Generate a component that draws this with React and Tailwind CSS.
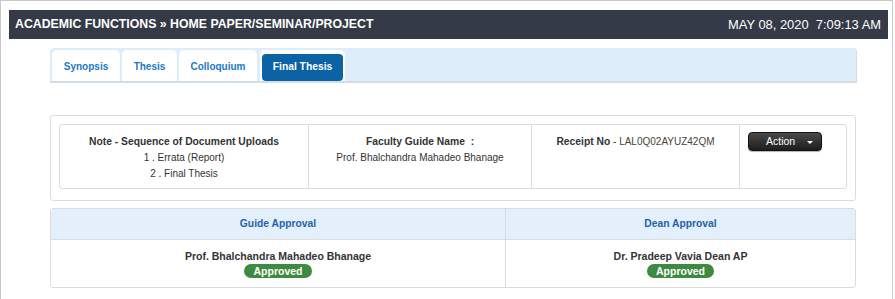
import React from "react";

const tabs = [
  { label: "Synopsis", w: "w-[68px]" },
  { label: "Thesis", w: "w-[55px]" },
  { label: "Colloquium", w: "w-[78px]" },
];

const Badge = () => (
  <span className="inline-block rounded-full bg-[#3f8a41] px-[9px] text-[10.5px] font-bold leading-[14px] text-white">
    Approved
  </span>
);

export default function App() {
  return (
    <div className="h-[299px] w-[895px] overflow-hidden bg-white font-['Liberation_Sans',Arial,sans-serif] text-[10px] text-[#333]">
      <div className="h-full w-[893px] border border-b-0 border-[#c9c9c9] pl-[8px] pr-[4px] pt-[9px]">
        {/* page header */}
        <div className="flex h-[29px] items-center justify-between bg-[#343a46] pl-[6px] pr-[7px] text-white">
          <span className="text-[12.3px] font-bold">ACADEMIC FUNCTIONS » HOME PAPER/SEMINAR/PROJECT</span>
          <span className="whitespace-pre text-[12.9px]">MAY 08, 2020  7:09:13 AM</span>
        </div>

        {/* tabs */}
        <div className="ml-[41px] mt-[9px] flex h-[35px] w-[807px] items-end gap-[2px] rounded-t-[4px] border-b-2 border-r border-[#d3dde6] bg-[#deedfa] pl-[2px]">
          {tabs.map((t) => (
            <div
              key={t.label}
              className={`${t.w} flex h-[31px] items-center justify-center rounded-t-[5px] bg-white pt-[2px] text-[10px] font-bold text-[#1b7ac4]`}
            >
              {t.label}
            </div>
          ))}
          <div className="ml-[1px] flex h-[31px] w-[85px] items-center justify-center rounded-t-[5px] bg-white px-[2px] pt-[3px]">
            <div className="flex h-[27px] w-full items-center justify-center rounded-[4px] bg-[#0b62a4] text-[10.3px] font-bold text-white">
              Final Thesis
            </div>
          </div>
        </div>

        {/* document panel */}
        <div className="ml-[41px] mt-[32px] w-[806px] rounded-[3px] border border-[#dcdcdc] p-[8px] pb-[11px]">
          <div className="grid h-[65px] grid-cols-[248px_223px_208px_1fr] rounded-[3px] border border-[#dcdcdc]">
            <div className="flex flex-col items-center pt-[9px] leading-[16px]">
              <span className="text-[10.3px] font-bold">Note - Sequence of Document Uploads</span>
              <span>1 . Errata (Report)</span>
              <span>2 . Final Thesis</span>
            </div>
            <div className="flex flex-col items-center border-l border-[#dcdcdc] pt-[9px] leading-[16px]">
              <span className="whitespace-pre text-[10.3px] font-bold">Faculty Guide Name  :</span>
              <span>Prof. Bhalchandra Mahadeo Bhanage</span>
            </div>
            <div className="flex flex-col items-center border-l border-[#dcdcdc] pt-[9px] leading-[16px]">
              <span>
                <b className="text-[10.3px]">Receipt No</b> - <span className="text-[#4b4436]">LAL0Q02AYUZ42QM</span>
              </span>
            </div>
            <div className="border-l border-[#dcdcdc] pl-[8px] pt-[7px]">
              <button className="flex h-[19px] w-[74px] items-center rounded-[4px] border border-[#111] bg-gradient-to-b from-[#4a4a4a] to-[#1e1e1e] pl-[17px] text-[10.5px] text-white shadow-[0_1px_1px_rgba(0,0,0,0.3)]">
                <span>Action</span>
                <span className="ml-[12px] mt-[1px] h-0 w-0 border-x-[3px] border-t-[3px] border-x-transparent border-t-white" />
              </button>
            </div>
          </div>
        </div>

        {/* approvals */}
        <div className="ml-[41px] mt-[7px] grid w-[806px] grid-cols-[454px_1fr] overflow-hidden rounded-[3px] border border-[#dcdcdc]">
          <div className="flex h-[31px] items-center justify-center border-b border-[#dcdcdc] bg-[#e3effa] text-[10.3px] font-bold text-[#1f63a8]">
            Guide Approval
          </div>
          <div className="flex h-[31px] items-center justify-center border-b border-l border-[#dcdcdc] bg-[#e3effa] text-[10.3px] font-bold text-[#1f63a8]">
            Dean Approval
          </div>
          <div className="flex h-[47px] flex-col items-center pt-[9px] leading-[15px]">
            <span className="text-[10.5px] font-bold">Prof. Bhalchandra Mahadeo Bhanage</span>
            <Badge />
          </div>
          <div className="flex h-[47px] flex-col items-center border-l border-[#dcdcdc] pt-[9px] leading-[15px]">
            <span className="text-[10.5px] font-bold">Dr. Pradeep Vavia Dean AP</span>
            <Badge />
          </div>
        </div>
      </div>
    </div>
  );
}
